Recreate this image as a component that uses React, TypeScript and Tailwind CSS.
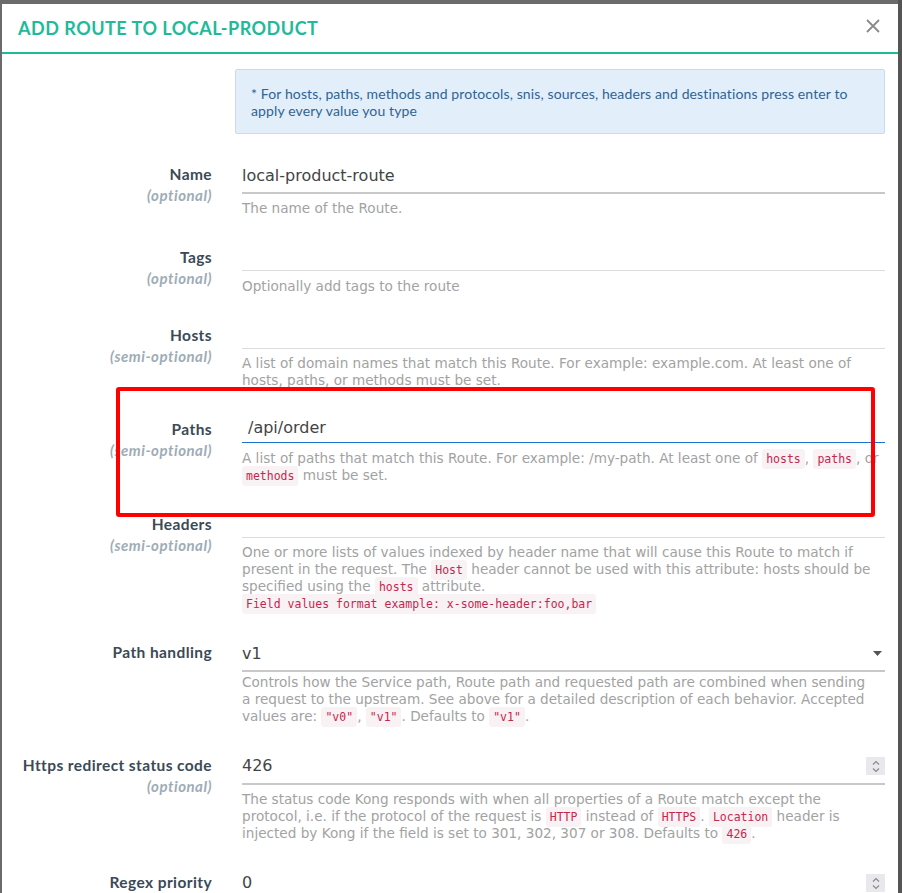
import React from "react";

const sans = "font-['DejaVu_Sans',sans-serif]";
const lato = "font-['Lato',sans-serif]";

function Code({ children }: { children: React.ReactNode }) {
  return (
    <code className="rounded-[3px] bg-[#f9f2f4] px-[4px] py-[3px] font-['DejaVu_Sans_Mono',monospace] text-[11.5px] leading-none text-[#c7254e]">
      {children}
    </code>
  );
}

function Label({ label, hint, pt }: { label: string; hint?: string; pt: string }) {
  return (
    <div className={`text-right ${lato} ${pt}`}>
      <div className="text-[15.5px] leading-[20px] font-bold tracking-[0.4px] text-[#3b4a56]">{label}</div>
      {hint && (
        <div className="text-[15px] leading-[22px] font-bold italic tracking-[0.5px] text-[#9eacb6]">{hint}</div>
      )}
    </div>
  );
}

function Desc({ lines, mt = "mt-[6px]" }: { lines: React.ReactNode[]; mt?: string }) {
  return (
    <div className={`${mt} ${sans} text-[13.6px] leading-[17px] text-[#a2a2a2]`}>
      {lines.map((l, i) => (
        <div key={i} className="whitespace-nowrap">
          {l}
        </div>
      ))}
    </div>
  );
}

function Spinner() {
  return (
    <div className="flex h-[18px] w-[19px] flex-col items-center justify-center gap-[3px] bg-[#e9e9ed]">
      <svg width="8" height="5" viewBox="0 0 8 5" fill="none" stroke="#8a8a8a" strokeWidth="1.2">
        <path d="M1 4.5 L4 1.5 L7 4.5" />
      </svg>
      <svg width="8" height="5" viewBox="0 0 8 5" fill="none" stroke="#8a8a8a" strokeWidth="1.2">
        <path d="M1 0.5 L4 3.5 L7 0.5" />
      </svg>
    </div>
  );
}

function PlainRow({
  label,
  hint,
  value,
  desc,
  select,
  spinner,
  descMt,
}: {
  label: string;
  hint?: string;
  value: string;
  desc?: React.ReactNode[];
  select?: boolean;
  spinner?: boolean;
  descMt?: string;
}) {
  return (
    <div className="mb-[25px] grid grid-cols-[210px_1fr] gap-x-[30px]">
      <Label label={label} hint={hint} pt="pt-[5px]" />
      <div>
        <div className="flex h-[35px] items-center justify-between border-b-2 border-[#c8c8c8]">
          <span className={`${sans} text-[16px] text-[#444]`}>{value}</span>
          {select && (
            <svg width="9" height="5" viewBox="0 0 9 5" className="mr-[3px]">
              <path d="M0 0 H9 L4.5 5 Z" fill="#555" />
            </svg>
          )}
          {spinner && <Spinner />}
        </div>
        {desc && <Desc lines={desc} mt={descMt} />}
      </div>
    </div>
  );
}

function TagRow({
  label,
  hint,
  value,
  desc,
  focused,
}: {
  label: string;
  hint?: string;
  value?: string;
  desc: React.ReactNode[];
  focused?: boolean;
}) {
  return (
    <div className="mb-[25px] grid grid-cols-[210px_1fr] gap-x-[30px]">
      <Label label={label} hint={hint} pt="pt-[5px]" />
      <div>
        <div
          className={
            focused
              ? "flex h-[29px] items-center border-b border-[#1a72cc] pl-[6px]"
              : "flex h-[29px] items-center border-b border-[#dcdcdc] pl-[6px]"
          }
        >
          <span className={`${sans} text-[16px] text-[#444]`}>{value}</span>
        </div>
        <Desc lines={desc} mt="mt-[6.5px]" />
      </div>
    </div>
  );
}

export default function App() {
  return (
    <div className="relative h-[893px] w-[902px] overflow-hidden bg-[#6b6b6b] pt-[4px] pl-[2px] pr-[4px]">
      <div className="h-full bg-white">
        <div className="flex h-[50px] items-center justify-between border-b-2 border-[#1fba9a] pl-[16px] pr-[18px]">
          <h1 className={`${lato} text-[18px] font-bold tracking-[0.5px] text-[#1fba9a]`}>ADD ROUTE TO LOCAL-PRODUCT</h1>
          <svg width="14" height="14" viewBox="0 0 14 14" stroke="#8a8a8a" strokeWidth="1.8" className="mb-[4px]">
            <path d="M1 1 L13 13 M13 1 L1 13" />
          </svg>
        </div>

        <div className="pt-[15px] pr-[13px]">
          <div className="mb-[25px] grid grid-cols-[210px_1fr] gap-x-[30px]">
            <div />
            <div className="-ml-[7px] rounded-[2px] border border-[#c6ddf0] bg-[#e2eef9] px-[15px] pt-[15px] pb-[14px]">
              <p className={`${lato} text-[14px] leading-[17px] tracking-[0.12px] text-[#2f6494]`}>
                * For hosts, paths, methods and protocols, snis, sources, headers and destinations press enter to
                <br />
                apply every value you type
              </p>
            </div>
          </div>

          <PlainRow label="Name" hint="(optional)" value="local-product-route" desc={["The name of the Route."]} />

          <TagRow label="Tags" hint="(optional)" desc={["Optionally add tags to the route"]} />

          <TagRow
            label="Hosts"
            hint="(semi-optional)"
            desc={[
              "A list of domain names that match this Route. For example: example.com. At least one of",
              "hosts, paths, or methods must be set.",
            ]}
          />

          <TagRow
            label="Paths"
            hint="(semi-optional)"
            value="/api/order"
            focused
            desc={[
              <>
                A list of paths that match this Route. For example: /my-path. At least one of <Code>hosts</Code>,{" "}
                <Code>paths</Code>, or
              </>,
              <>
                <Code>methods</Code> must be set.
              </>,
            ]}
          />

          <TagRow
            label="Headers"
            hint="(semi-optional)"
            desc={[
              "One or more lists of values indexed by header name that will cause this Route to match if",
              <>
                present in the request. The <Code>Host</Code> header cannot be used with this attribute: hosts should be
              </>,
              <>
                specified using the <Code>hosts</Code> attribute.
              </>,
              <>
                <Code>Field values format example: x-some-header:foo,bar</Code>
              </>,
            ]}
          />

          <PlainRow
            label="Path handling"
            value="v1"
            select
            descMt="mt-[1.5px]"
            desc={[
              "Controls how the Service path, Route path and requested path are combined when sending",
              "a request to the upstream. See above for a detailed description of each behavior. Accepted",
              <>
                values are: <Code>"v0"</Code>, <Code>"v1"</Code>. Defaults to <Code>"v1"</Code>.
              </>,
            ]}
          />

          <PlainRow
            label="Https redirect status code"
            hint="(optional)"
            value="426"
            spinner
            desc={[
              "The status code Kong responds with when all properties of a Route match except the",
              <>
                protocol, i.e. if the protocol of the request is <Code>HTTP</Code> instead of <Code>HTTPS</Code>.{" "}
                <Code>Location</Code> header is
              </>,
              <>
                injected by Kong if the field is set to 301, 302, 307 or 308. Defaults to <Code>426</Code>.
              </>,
            ]}
          />

          <PlainRow label="Regex priority" value="0" spinner />
        </div>
      </div>

      <div className="absolute top-[387px] left-[116px] h-[130px] w-[759px] rounded-[3px] border-4 border-[#ff0000]" />
      <div className="absolute top-0 right-0 h-full w-[4px] bg-[#555]" />
    </div>
  );
}
